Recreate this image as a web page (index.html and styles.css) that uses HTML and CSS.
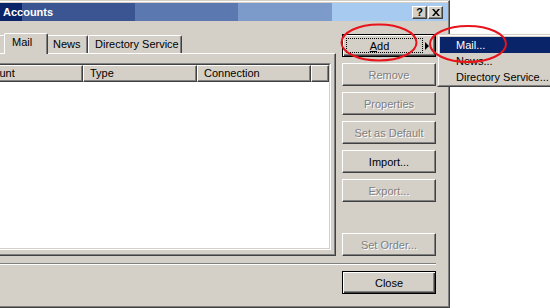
FILE: index.html
```html
<!DOCTYPE html>
<html>
<head>
<meta charset="utf-8">
<link rel="stylesheet" href="styles.css">
</head>
<body>
<div class="window">
  <div class="titlebar">
    <span class="title">Accounts</span>
    <div class="tbtns">
      <span class="tbtn help">?</span>
      <span class="tbtn">
        <svg class="xicon" width="8" height="7" viewBox="0 0 8 7"><path d="M0 0h2l2 2.5 2-2.5h2L5 3.5 8 7H6L4 4.5 2 7H0l3-3.5z" fill="#000"/></svg>
      </span>
    </div>
  </div>
  <div class="main">
    <div class="left">
      <div class="tabs">
        <div class="tab tab-all"></div>
        <div class="tab sel">Mail</div>
        <div class="tab tab-news">News</div>
        <div class="tab tab-dir">Directory Service</div>
      </div>
      <div class="panel">
        <div class="list">
          <div class="list-inner">
            <div class="header">
              <div class="hcell c1">Account</div>
              <div class="hcell c2">Type</div>
              <div class="hcell c3">Connection</div>
              <div class="hcell c4"></div>
            </div>
            <div class="listbody"></div>
          </div>
        </div>
      </div>
    </div>
    <div class="buttons">
      <div class="btn default add">
        <span class="focus"><span class="ul">A</span>dd</span>
        <span class="arrow"></span>
      </div>
      <div class="btn dis">Remove</div>
      <div class="btn dis">Properties</div>
      <div class="btn dis">Set as Default</div>
      <div class="btn">Import...</div>
      <div class="btn dis">Export...</div>
      <div class="btn dis order">Set Order...</div>
    </div>
  </div>
  <div class="sep"></div>
  <div class="footer">
    <div class="btn default close">Close</div>
  </div>
</div>
<div class="menu">
  <div class="menu-inner">
    <div class="mitem hl">Mail...</div>
    <div class="mitem">News...</div>
    <div class="mitem">Directory Service...</div>
  </div>
</div>
<svg class="marks" width="550" height="308" viewBox="0 0 550 308">
  <ellipse cx="379" cy="42.5" rx="37.5" ry="18" fill="none" stroke="#e8141c" stroke-width="2"/>
  <ellipse cx="468" cy="44" rx="38" ry="18" fill="none" stroke="#e8141c" stroke-width="2"/>
</svg>
</body>
</html>
```
FILE: styles.css
```css
* { box-sizing: border-box; }
html, body { margin: 0; padding: 0; }
body {
  width: 550px;
  height: 308px;
  overflow: hidden;
  position: relative;
  background: #fff;
  font-family: "Liberation Sans", Arial, sans-serif;
  font-size: 11px;
  color: #000;
}
.window {
  width: 450px;
  height: 308px;
  background: #d4d0c8;
  border-top: 1px solid #d4d0c8;
  border-right: 1px solid #404040;
  border-bottom: 1px solid #404040;
  padding-top: 2px;
  box-shadow: inset -1px -1px #808080, inset 0 1px #fff;
  display: flex;
  flex-direction: column;
  overflow: hidden;
}
.titlebar {
  height: 18px;
  margin-right: 1px;
  display: flex;
  align-items: center;
  background: linear-gradient(to right,
    #0a246a 0, #0a246a 22px,
    #3a5591 22px, #3a5591 135px,
    #5b79b0 135px, #5b79b0 238px,
    #7c9bcb 238px, #7c9bcb 332px,
    #a6caf0 332px);
}
.title {
  color: #fff;
  font-weight: bold;
  padding-left: 3px;
  line-height: 18px;
}
.tbtns {
  margin-left: auto;
  display: flex;
  gap: 1px;
  padding-right: 5px;
}
.tbtn {
  width: 15px;
  height: 13px;
  background: #d4d0c8;
  border: 1px solid;
  border-color: #fff #404040 #404040 #fff;
  box-shadow: inset -1px -1px #808080;
  display: flex;
  align-items: center;
  justify-content: center;
  font-weight: bold;
  font-size: 11px;
  line-height: 11px;
}
.xicon { display: block; }

.main {
  display: flex;
  height: 235px;
}
.left {
  margin-left: -40px;
  width: 376px;
  flex: none;
  padding-top: 12px;
  display: flex;
  flex-direction: column;
}
.tabs {
  display: flex;
  align-items: flex-end;
  height: 20px;
  padding-left: 2px;
  position: relative;
  z-index: 1;
}
.tab {
  height: 18px;
  line-height: 17px;
  padding-left: 6px;
  background: #d4d0c8;
  border-top: 1px solid #fff;
  border-left: 1px solid #fff;
  border-right: 1px solid #404040;
  border-top-left-radius: 2px;
  border-top-right-radius: 2px;
  box-shadow: inset -1px 0 #808080;
  flex: none;
  white-space: nowrap;
}
.tab-all { width: 44px; }
.tab.sel {
  width: 44px;
  height: 21px;
  margin: 0 -2px -1px;
  padding-left: 7px;
  position: relative;
  z-index: 2;
  line-height: 17px;
}
.tab-news { width: 42px; }
.tab-dir { width: 94px; }

.panel {
  height: 203px;
  border-top: 1px solid #fff;
  border-left: 1px solid #fff;
  border-right: 1px solid #404040;
  border-bottom: 1px solid #404040;
  box-shadow: inset -1px -1px #808080;
  padding: 9px 4px 5px 5px;
  display: flex;
}
.list {
  flex: 1;
  display: flex;
  border: 1px solid;
  border-color: #808080 #fff #fff #808080;
}
.list-inner {
  flex: 1;
  display: flex;
  flex-direction: column;
  border: 1px solid;
  border-color: #404040 #d4d0c8 #d4d0c8 #404040;
  background: #fff;
}
.header {
  display: flex;
  height: 17px;
  flex: none;
}
.hcell {
  height: 17px;
  line-height: 15px;
  padding-left: 6px;
  background: #d4d0c8;
  border-top: 1px solid #fff;
  border-left: 1px solid #fff;
  border-right: 1px solid #404040;
  border-bottom: 1px solid #404040;
  box-shadow: inset -1px -1px #808080;
  white-space: nowrap;
  overflow: hidden;
  flex: none;
}
.c1 { width: 115px; }
.c2 { width: 114px; }
.c3 { width: 114px; }
.c4 { flex: 1; }
.listbody { flex: 1; background: #fff; }

.buttons {
  margin-left: 6px;
  width: 94px;
  flex: none;
  padding-top: 13px;
  display: flex;
  flex-direction: column;
  gap: 6px;
}
.btn {
  height: 23px;
  flex: none;
  display: flex;
  align-items: center;
  justify-content: center;
  background: #d4d0c8;
  border: 1px solid;
  border-color: #fff #404040 #404040 #fff;
  box-shadow: inset -1px -1px #808080;
  white-space: nowrap;
}
.btn.dis {
  color: #808080;
  text-shadow: 1px 1px 0 #fff;
}
.btn.default {
  border-color: #000;
  box-shadow: inset 1px 1px #fff, inset -1px -1px #404040, inset -2px -2px #808080;
}
.btn.order { margin-top: auto; }
.btn.add {
  justify-content: flex-start;
  padding: 3px;
}
.focus {
  width: 77px;
  height: 15px;
  padding-right: 10px;
  border: 1px dotted #000;
  display: flex;
  align-items: center;
  justify-content: center;
}
.ul { text-decoration: underline; }
.arrow {
  margin-left: 2px;
  width: 0;
  height: 0;
  border-left: 4px solid #000;
  border-top: 4px solid transparent;
  border-bottom: 4px solid transparent;
}

.sep {
  height: 2px;
  margin: 7px 13px 0 0;
  border-top: 1px solid #808080;
  border-bottom: 1px solid #fff;
  flex: none;
}
.footer {
  display: flex;
  justify-content: flex-end;
  padding-right: 13px;
  margin-top: 6px;
}
.btn.close { width: 94px; }

.menu {
  position: absolute;
  left: 437px;
  top: 34px;
  width: 125px;
  border: 1px solid;
  border-color: #d4d0c8 #404040 #404040 #d4d0c8;
  background: #d4d0c8;
}
.menu-inner {
  border: 1px solid;
  border-color: #fff #808080 #808080 #fff;
  padding: 1px 1px 0;
}
.mitem {
  height: 16px;
  line-height: 16px;
  padding-left: 16px;
  white-space: nowrap;
}
.mitem.hl {
  background: #0a246a;
  color: #fff;
}
.marks {
  position: absolute;
  left: 0;
  top: 0;
  pointer-events: none;
}
```
